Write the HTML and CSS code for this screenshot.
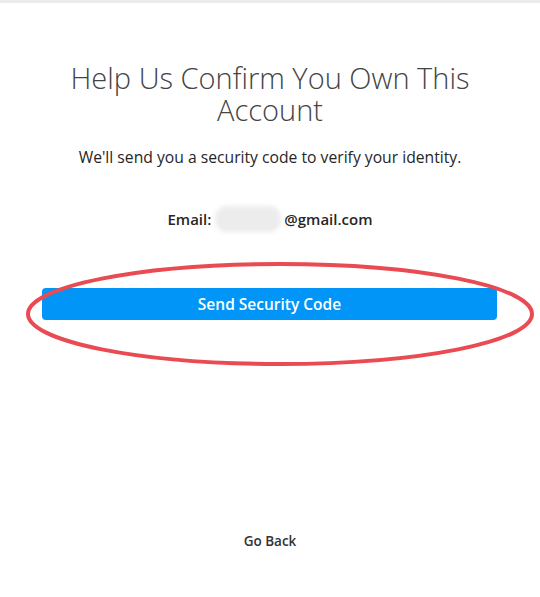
FILE: index.html
```html
<!DOCTYPE html>
<html>
<head>
<meta charset="utf-8">
<link rel="stylesheet" href="styles.css">
</head>
<body>
<div class="topbar"></div>
<main class="page">
  <h1 class="title">Help Us Confirm You Own This Account</h1>
  <p class="subtitle">We'll send you a security code to verify your identity.</p>
  <p class="email">Email:<span class="blur"></span>@gmail.com</p>
  <div class="action">
    <button class="send">Send Security Code</button>
    <svg class="circle" width="520" height="112" viewBox="0 0 520 112">
      <ellipse cx="258" cy="56" rx="252" ry="50" fill="none" stroke="#ea4a52" stroke-width="4"/>
    </svg>
  </div>
  <div class="spacer"></div>
  <a class="back">Go Back</a>
</main>
</body>
</html>
```
FILE: styles.css
```css
html, body {
  margin: 0;
  padding: 0;
  background: #fff;
}
body {
  font-family: "Open Sans", "Noto Sans", sans-serif;
  color: #262626;
  height: 597px;
  overflow: hidden;
}
.topbar {
  height: 3px;
  background: #ececec;
}
.page {
  width: 456px;
  margin: 0 auto;
  display: flex;
  flex-direction: column;
  align-items: center;
  height: 594px;
}
.title {
  margin: 59px 0 0;
  font-weight: 300;
  font-size: 29px;
  line-height: 32px;
  color: #444;
  text-align: center;
  width: 440px;
}
.subtitle {
  margin: 21px 0 0;
  font-size: 15.7px;
  line-height: 20px;
  color: #262626;
  white-space: nowrap;
}
.email {
  margin: 39px 0 0;
  font-size: 15px;
  line-height: 20px;
  font-weight: 600;
  color: #262626;
  display: flex;
  align-items: center;
}
.blur {
  display: inline-block;
  width: 66px;
  height: 26px;
  margin: 0 3px 0 4px;
  border-radius: 12px;
  background: #ececec;
  filter: blur(2px);
}
.action {
  position: relative;
  width: 456px;
  margin-top: 56px;
}
.send {
  display: block;
  width: 455px;
  height: 32px;
  border: none;
  border-radius: 4px;
  background: #0095f6;
  color: #fff;
  font-family: "Open Sans", "Noto Sans", sans-serif;
  font-weight: 600;
  font-size: 15.5px;
  padding: 0;
}
.circle {
  position: absolute;
  left: -20px;
  top: -30px;
}
.spacer {
  flex: 1;
}
.back {
  font-size: 13.5px;
  font-weight: 600;
  color: #333;
  margin-bottom: 47px;
}
```
